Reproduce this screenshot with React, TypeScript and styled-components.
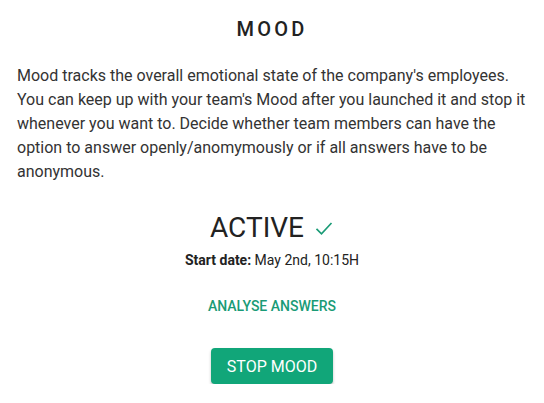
import React from "react";
import styled, { createGlobalStyle } from "styled-components";

const Global = createGlobalStyle`
  html, body { margin: 0; padding: 0; background: #fff; }
  body { font-family: Roboto, "Liberation Sans", Arial, sans-serif; color: #222; }
`;

const Page = styled.div`
  width: 544px;
  box-sizing: border-box;
  padding: 16px 17px 0 17px;
  display: flex;
  flex-direction: column;
  align-items: center;
`;

const Title = styled.h1`
  margin: 0;
  font-size: 20px;
  font-weight: 500;
  letter-spacing: 3.2px;
  line-height: 26px;
  color: #222;
`;

const Description = styled.p`
  margin: 22px 0 0 0;
  align-self: stretch;
  font-size: 16px;
  line-height: 24px;
  color: #333;
`;

const StatusRow = styled.div`
  margin-top: 27px;
  display: flex;
  align-items: center;
  gap: 10px;
`;

const Status = styled.span`
  font-size: 28px;
  line-height: 34px;
  color: #222;
  font-weight: 400;
`;

const Check = styled.svg`
  width: 20px;
  height: 20px;
`;

const StartDate = styled.div`
  margin-top: 6px;
  font-size: 14px;
  line-height: 18px;
  color: #222;
  b { font-weight: 700; }
`;

const LinkButton = styled.button`
  margin-top: 29px;
  background: none;
  border: none;
  padding: 0;
  font-family: inherit;
  font-size: 14px;
  font-weight: 500;
  color: #1a9b76;
  cursor: pointer;
`;

const PrimaryButton = styled.button`
  margin-top: 34px;
  width: 122px;
  height: 36px;
  border: none;
  border-radius: 4px;
  background: #11a679;
  color: #fff;
  font-family: inherit;
  font-size: 16px;
  font-weight: 400;
  box-shadow: 0 2px 3px rgba(0, 0, 0, 0.25);
  cursor: pointer;
`;

export default function App() {
  return (
    <>
      <Global />
      <Page>
        <Title>MOOD</Title>
        <Description>
          Mood tracks the overall emotional state of the company's employees. You can keep up with your team's Mood after you launched it and stop it whenever you want to. Decide whether team members can have the option to answer openly/anomymously or if all answers have to be anonymous.
        </Description>
        <StatusRow>
          <Status>ACTIVE</Status>
          <Check viewBox="0 0 24 24" fill="none" stroke="#1a9b76" strokeWidth="2">
            <path d="M3 13l6 6L21 6" />
          </Check>
        </StatusRow>
        <StartDate>
          <b>Start date:</b> May 2nd, 10:15H
        </StartDate>
        <LinkButton>ANALYSE ANSWERS</LinkButton>
        <PrimaryButton>STOP MOOD</PrimaryButton>
      </Page>
    </>
  );
}
